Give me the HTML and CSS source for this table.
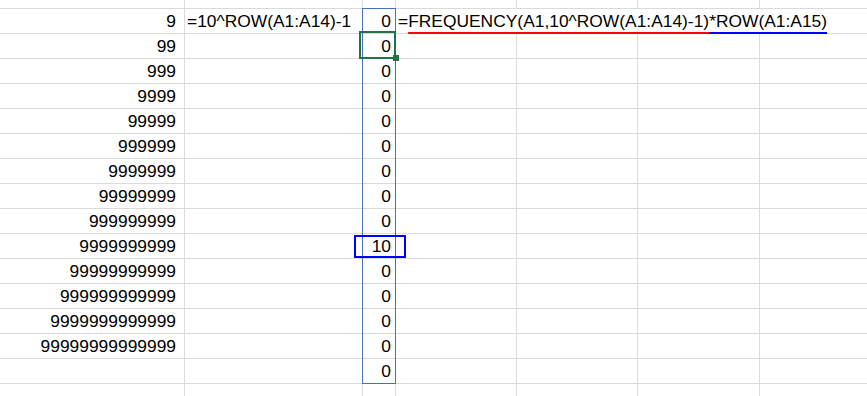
FILE: index.html
```html
<!DOCTYPE html>
<html>
<head>
<meta charset="utf-8">
<link rel="stylesheet" href="styles.css">
</head>
<body>
<div class="sheet">
  <div class="row top"><div class="c a"></div><div class="c b"></div><div class="c n"></div><div class="c d"></div><div class="c d"></div><div class="c f"></div><div class="c d"></div></div>
  <div class="row"><div class="c a">9</div><div class="c b">=10^ROW(A1:A14)-1</div><div class="c n">0</div><div class="c d ov lead">=<span class="ul-red">FREQUENCY(A1,10^ROW(A1:A14)-1)</span><span class="ul-blue">*ROW(A1:A15)</span></div><div class="c d ov"></div><div class="c f ov"></div><div class="c d"></div></div>
  <div class="row"><div class="c a">99</div><div class="c b"></div><div class="c n">0</div><div class="c d"></div><div class="c d"></div><div class="c f"></div><div class="c d"></div></div>
  <div class="row"><div class="c a">999</div><div class="c b"></div><div class="c n">0</div><div class="c d"></div><div class="c d"></div><div class="c f"></div><div class="c d"></div></div>
  <div class="row"><div class="c a">9999</div><div class="c b"></div><div class="c n">0</div><div class="c d"></div><div class="c d"></div><div class="c f"></div><div class="c d"></div></div>
  <div class="row"><div class="c a">99999</div><div class="c b"></div><div class="c n">0</div><div class="c d"></div><div class="c d"></div><div class="c f"></div><div class="c d"></div></div>
  <div class="row"><div class="c a">999999</div><div class="c b"></div><div class="c n">0</div><div class="c d"></div><div class="c d"></div><div class="c f"></div><div class="c d"></div></div>
  <div class="row"><div class="c a">9999999</div><div class="c b"></div><div class="c n">0</div><div class="c d"></div><div class="c d"></div><div class="c f"></div><div class="c d"></div></div>
  <div class="row"><div class="c a">99999999</div><div class="c b"></div><div class="c n">0</div><div class="c d"></div><div class="c d"></div><div class="c f"></div><div class="c d"></div></div>
  <div class="row"><div class="c a">999999999</div><div class="c b"></div><div class="c n">0</div><div class="c d"></div><div class="c d"></div><div class="c f"></div><div class="c d"></div></div>
  <div class="row"><div class="c a">9999999999</div><div class="c b"></div><div class="c n">10</div><div class="c d"></div><div class="c d"></div><div class="c f"></div><div class="c d"></div></div>
  <div class="row"><div class="c a">99999999999</div><div class="c b"></div><div class="c n">0</div><div class="c d"></div><div class="c d"></div><div class="c f"></div><div class="c d"></div></div>
  <div class="row"><div class="c a">999999999999</div><div class="c b"></div><div class="c n">0</div><div class="c d"></div><div class="c d"></div><div class="c f"></div><div class="c d"></div></div>
  <div class="row"><div class="c a">9999999999999</div><div class="c b"></div><div class="c n">0</div><div class="c d"></div><div class="c d"></div><div class="c f"></div><div class="c d"></div></div>
  <div class="row"><div class="c a">99999999999999</div><div class="c b"></div><div class="c n">0</div><div class="c d"></div><div class="c d"></div><div class="c f"></div><div class="c d"></div></div>
  <div class="row"><div class="c a"></div><div class="c b"></div><div class="c n">0</div><div class="c d"></div><div class="c d"></div><div class="c f"></div><div class="c d"></div></div>
  <div class="row"><div class="c a"></div><div class="c b"></div><div class="c n"></div><div class="c d"></div><div class="c d"></div><div class="c f"></div><div class="c d"></div></div>

  <div class="range"></div>
  <div class="active"></div>
  <div class="handle"></div>
  <div class="ref-box"></div>
</div>
</body>
</html>
```
FILE: styles.css
```css
html, body {
  margin: 0;
  padding: 0;
  background: #ffffff;
  overflow: hidden;
}

.sheet {
  position: relative;
  width: 881px;
  height: 396px;
  overflow: hidden;
  font-family: "Liberation Sans", Arial, sans-serif;
  font-size: 17.4px;
  color: #000;
}

.row {
  display: grid;
  grid-template-columns: 185px 178px 33px 121px 121px 122px 121px;
  height: 25px;
}

.row.top {
  height: 9px;
}

.c {
  box-sizing: border-box;
  border-right: 1px solid #dadada;
  border-bottom: 1px solid #dadada;
  line-height: 24px;
  white-space: nowrap;
  overflow: visible;
  position: relative;
}

.c.ov {
  border-right-color: transparent;
}

.c.lead {
  z-index: 1;
}

.a {
  text-align: right;
  padding-right: 8px;
}

.b {
  text-align: left;
  padding-left: 2px;
}

.n {
  text-align: right;
  padding-right: 4px;
}

.d, .f {
  text-align: left;
  padding-left: 2px;
}

.ul-red,
.ul-blue {
  text-decoration-line: underline;
  text-decoration-thickness: 2px;
  text-underline-offset: 5px;
  text-decoration-skip-ink: none;
}

.ul-red {
  text-decoration-color: #ff0000;
}

.ul-blue {
  text-decoration-color: #0000ff;
}

.range {
  position: absolute;
  left: 362px;
  top: 8px;
  width: 34px;
  height: 376px;
  box-sizing: border-box;
  border: 1px solid #4472c4;
  pointer-events: none;
}

.active {
  position: absolute;
  left: 359px;
  top: 31px;
  width: 37px;
  height: 28px;
  box-sizing: border-box;
  border: 2px solid #217346;
}

.handle {
  position: absolute;
  left: 393px;
  top: 55px;
  width: 6px;
  height: 6px;
  background: #217346;
}

.ref-box {
  position: absolute;
  left: 354px;
  top: 235px;
  width: 52px;
  height: 23px;
  box-sizing: border-box;
  border: 2px solid #0000ff;
}
```
